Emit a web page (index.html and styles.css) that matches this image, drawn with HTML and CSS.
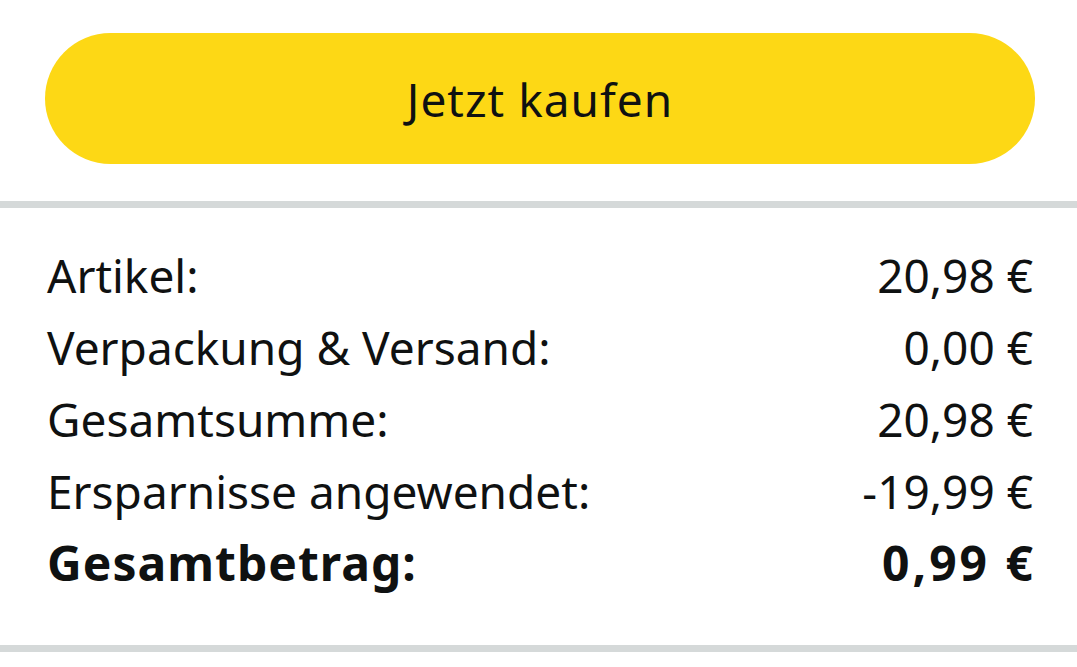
FILE: index.html
```html
<!DOCTYPE html>
<html lang="de">
<head>
<meta charset="utf-8">
<link rel="stylesheet" href="styles.css">
</head>
<body>
<div class="page">
  <div class="buy-wrap">
    <button class="buy">Jetzt kaufen</button>
  </div>
  <div class="divider"></div>
  <div class="summary">
    <div class="row"><span>Artikel:</span><span>20,98 €</span></div>
    <div class="row"><span>Verpackung &amp; Versand:</span><span>0,00 €</span></div>
    <div class="row"><span>Gesamtsumme:</span><span>20,98 €</span></div>
    <div class="row"><span>Ersparnisse angewendet:</span><span>-19,99 €</span></div>
    <div class="row total"><span class="total-label">Gesamtbetrag:</span><span class="total-value">0,99 €</span></div>
  </div>
  <div class="divider"></div>
</div>
</body>
</html>
```
FILE: styles.css
```css
html, body {
  margin: 0;
  padding: 0;
  background: #ffffff;
}
body {
  font-family: "Noto Sans", "Open Sans", sans-serif;
  color: #0f1111;
}
.page {
  width: 1077px;
}
.buy-wrap {
  padding: 33px 42px 37px 45px;
}
.buy {
  display: block;
  width: 100%;
  height: 131px;
  border: none;
  border-radius: 66px;
  background: #fdd815;
  font-family: inherit;
  font-size: 46px;
  letter-spacing: 1px;
  color: #0f1111;
  padding: 0;
}
.divider {
  height: 7px;
  background: #d5d9d9;
}
.summary {
  padding: 31px 44px 46px 47px;
}
.row {
  display: flex;
  justify-content: space-between;
  align-items: center;
  font-size: 46px;
  line-height: 72px;
  height: 72px;
}
.row.total {
  font-weight: 700;
  font-size: 48px;
}
.total-label {
  letter-spacing: 1px;
}
.total-value {
  letter-spacing: 3px;
  margin-right: -3px;
}
```
